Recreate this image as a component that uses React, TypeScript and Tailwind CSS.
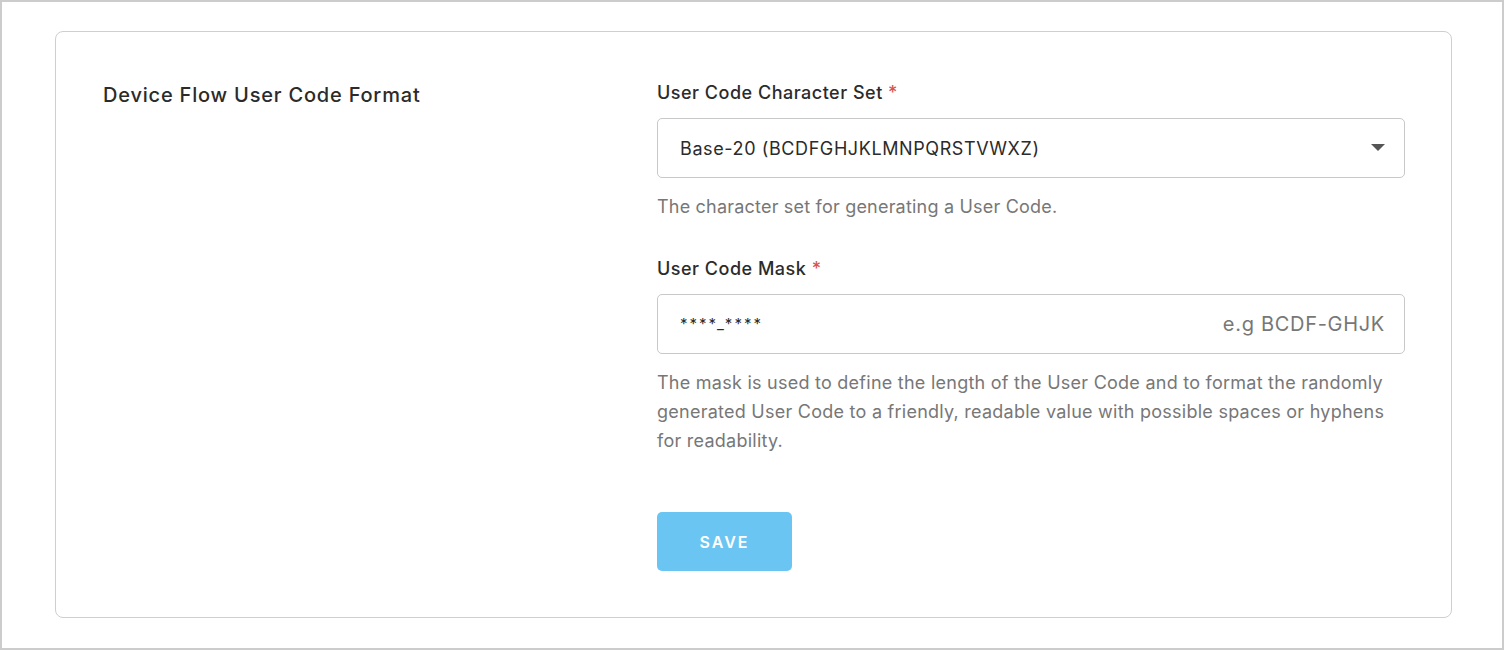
import React from "react";

export default function App() {
  return (
    <div
      className="w-[1504px] h-[650px] border-2 border-[#cccccc] bg-white pl-[53px] pr-[50px] pt-[29px] box-border"
      style={{ fontFamily: "Inter, 'Noto Sans', sans-serif" }}
    >
      <div className="border border-[#cfcfd3] rounded-[8px] pl-[47px] pr-[46px] pt-[48px] pb-[46px] flex">
        <div className="w-[554px] shrink-0">
          <div className="text-[20px] leading-[26px] font-medium text-[#2b2b2b] mt-[2px] tracking-[0.8px]">
            Device Flow User Code Format
          </div>
        </div>
        <div className="flex-1 flex flex-col">
          <div className="text-[18px] leading-[26px] font-medium text-[#2b2b2b] tracking-[0.5px]">
            User Code Character Set <span className="text-[#d9534f]">*</span>
          </div>
          <div className="mt-[12px] h-[60px] border border-[#c8c8c8] rounded-[5px] flex items-center pl-[22px] pr-[19px] justify-between">
            <span className="text-[18px] text-[#2b2b2b] tracking-[0.6px]">Base-20 (BCDFGHJKLMNPQRSTVWXZ)</span>
            <svg width="14" height="8" viewBox="0 0 14 8">
              <path d="M0 0 L14 0 L7 7 Z" fill="#555" />
            </svg>
          </div>
          <div className="mt-[14px] text-[18px] leading-[29px] text-[#777777] tracking-[0.2px]">
            The character set for generating a User Code.
          </div>
          <div className="mt-[35px] text-[18px] leading-[26px] font-medium text-[#2b2b2b] tracking-[0.5px]">
            User Code Mask <span className="text-[#d9534f]">*</span>
          </div>
          <div className="mt-[12px] h-[60px] border border-[#c8c8c8] rounded-[5px] flex items-center pl-[22px] pr-[19px] justify-between">
            <span className="text-[15px] text-[#2b2b2b] tracking-[2px]">****_****</span>
            <span className="text-[20px] text-[#777777] tracking-[0.7px]">e.g BCDF-GHJK</span>
          </div>
          <div className="mt-[14px] text-[18px] leading-[29px] text-[#777777] tracking-[0.25px] pr-[20px]">
            The mask is used to define the length of the User Code and to format the randomly generated User Code to a friendly, readable value with possible spaces or hyphens for readability.
          </div>
          <div className="mt-[57px]">
            <button className="w-[135px] h-[59px] rounded-[5px] bg-[#6bc5f2] text-white text-[16px] font-semibold tracking-[2px]">
              SAVE
            </button>
          </div>
        </div>
      </div>
    </div>
  );
}
